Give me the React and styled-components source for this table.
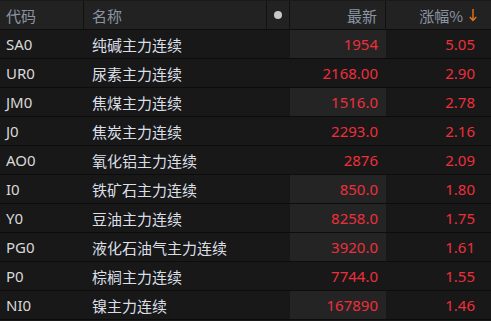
import React from "react";
import styled, { createGlobalStyle } from "styled-components";

const Global = createGlobalStyle`
  html, body { margin: 0; padding: 0; background: #181818; }
  body { font-family: "Noto Sans", "Noto Sans CJK SC", sans-serif; }
`;

const cols = "84px 183px 23px 96px 1fr";

const Table = styled.div`
  width: 491px;
  height: 321px;
  background: #181818;
  overflow: hidden;
`;

const HeaderRow = styled.div`
  display: grid;
  grid-template-columns: ${cols};
  height: 28px;
  background: #222222;
  border-top: 1px solid #1a1a1a;
  border-bottom: 1px solid #0e0e0e;
`;

const HeadCell = styled.div`
  display: flex;
  align-items: center;
  justify-content: ${(p) => (p.$align === "right" ? "flex-end" : p.$align === "center" ? "center" : "flex-start")};
  padding: 0 ${(p) => p.$pr ?? 8}px 0 ${(p) => p.$pl ?? 8}px;
  border-right: ${(p) => (p.$last ? "none" : "1px solid #111111")};
  color: #8b95a2;
  font-size: 15px;
  font-family: "Noto Sans CJK SC", "Noto Sans", sans-serif;
  white-space: nowrap;
`;

const Dot = styled.span`
  width: 8px;
  height: 8px;
  border-radius: 50%;
  background: #c8c8c8;
`;

const ArrowSvg = styled.svg`
  margin-left: 6px;
  display: block;
`;

const SortArrow = () => (
  <ArrowSvg width="8" height="14" viewBox="0 0 8 14">
    <path d="M4 1 V12.5 M0.8 9 L4 12.5 L7.2 9" fill="none" stroke="#e2761e" strokeWidth="1.4" />
  </ArrowSvg>
);

const Row = styled.div`
  display: grid;
  grid-template-columns: ${cols};
  height: 28px;
  border-bottom: 1px solid #0d0d0d;
`;

const Cell = styled.div`
  display: flex;
  align-items: center;
  justify-content: ${(p) => (p.$right ? "flex-end" : "flex-start")};
  padding: 0 ${(p) => p.$pr ?? 8}px 0 ${(p) => p.$pl ?? 8}px;
  font-size: 15px;
  white-space: nowrap;
  color: ${(p) => p.$color || "#dadfe6"};
  background: ${(p) => (p.$hl ? "#242424" : "transparent")};
`;

const NameCell = styled(Cell)`
  font-family: "Noto Sans CJK SC", sans-serif;
`;

const data = [
  ["SA0", "纯碱主力连续", "1954", "5.05", true],
  ["UR0", "尿素主力连续", "2168.00", "2.90", false],
  ["JM0", "焦煤主力连续", "1516.0", "2.78", true],
  ["J0", "焦炭主力连续", "2293.0", "2.16", false],
  ["AO0", "氧化铝主力连续", "2876", "2.09", false],
  ["I0", "铁矿石主力连续", "850.0", "1.80", true],
  ["Y0", "豆油主力连续", "8258.0", "1.75", true],
  ["PG0", "液化石油气主力连续", "3920.0", "1.61", true],
  ["P0", "棕榈主力连续", "7744.0", "1.55", false],
  ["NI0", "镍主力连续", "167890", "1.46", true],
];

const RED = "#ee2f3b";

export default function App() {
  return (
    <>
      <Global />
      <Table>
        <HeaderRow>
          <HeadCell $pl={6}>代码</HeadCell>
          <HeadCell>名称</HeadCell>
          <HeadCell $align="center" $pl={0} $pr={0}>
            <Dot />
          </HeadCell>
          <HeadCell $align="right">最新</HeadCell>
          <HeadCell $align="right" $last $pr={14}>
            涨幅%<SortArrow />
          </HeadCell>
        </HeaderRow>
        {data.map(([code, name, price, pct, hl]) => (
          <Row key={code}>
            <Cell $pl={6} $color="#d8d8d8">{code}</Cell>
            <NameCell>{name}</NameCell>
            <Cell />
            <Cell $right $hl={hl} $color={RED}>{price}</Cell>
            <Cell $right $pr={16} $color={RED}>{pct}</Cell>
          </Row>
        ))}
      </Table>
    </>
  );
}
